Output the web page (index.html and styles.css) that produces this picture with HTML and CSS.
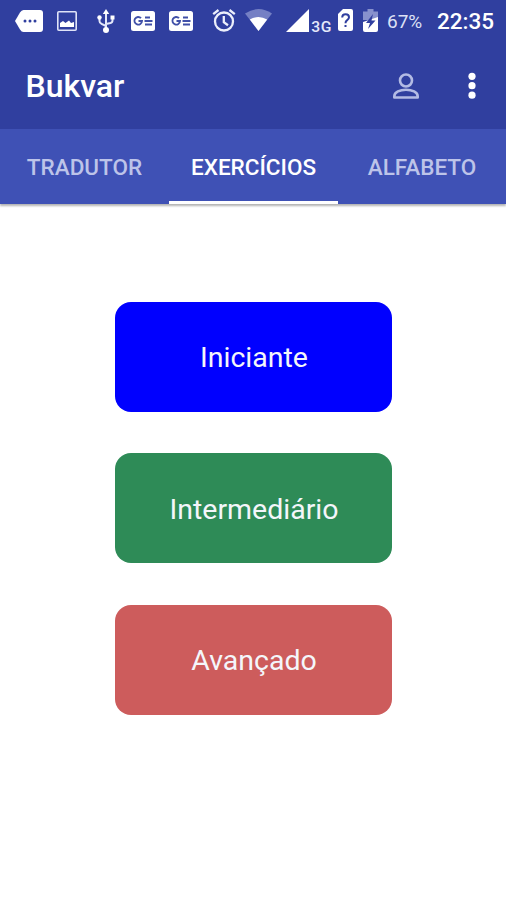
FILE: index.html
```html
<!DOCTYPE html>
<html lang="pt">
<head>
	<meta charset="UTF-8">
	<meta name="viewport" content="width=device-width, initial-scale=1.0">
	<title>Bukvar</title>
	<link rel="stylesheet" href="styles.css">
</head>
<body>
	<div class="statusBar">
		<svg class="message" width="28" height="22" viewBox="0 0 28 22">
			<path fill="#fff" d="M8.500 0H25a3 3 0 0 1 3 3v16a3 3 0 0 1-3 3H8.500Q6.500 22 5 19.500L0 11l5-8.500Q6.500 0 8.500 0z"/>
			<g fill="#303f9f"><circle cx="10" cy="11" r="1.500"/><circle cx="15" cy="11" r="1.500"/><circle cx="20" cy="11" r="1.500"/></g>
		</svg>
		<svg class="picture" width="20" height="20" viewBox="0 0 20 20">
			<rect x=".8" y=".8" width="18.400" height="18.400" rx="1" fill="none" stroke="#dfe3f8" stroke-width="1.600"/>
			<path fill="#fff" d="M3 16v-4l3-2 2.500 2L12 9.500l2 2.500 3-1v5z"/>
		</svg>
		<svg class="usb" width="18" height="24" viewBox="0 0 18 24">
			<g fill="none" stroke="#e4e8fa" stroke-width="2"><path d="M9 3v18M2.500 8v4q0 2 2 2.800L9 17M15.500 8v3.500q0 2-2 2.500L9 15"/></g>
			<g fill="#fff"><path d="M9 0l3.200 5H5.800z"/><circle cx="9" cy="21" r="3"/><circle cx="2.500" cy="8.500" r="2.200"/><path d="M13.500 6.500h4v4h-4z"/></g>
		</svg>
		<svg class="news" width="24" height="20" viewBox="0 0 24 20">
			<rect width="24" height="20" rx="2.500" fill="#fff"/>
			<g fill="none" stroke="#4050a8" stroke-width="1.900"><path d="M10 7.200A3.800 3.800 0 1 0 11 10H7.500M14 6.500h5M13.500 10h8M14 13.500h7"/></g>
		</svg>
		<svg class="news" width="24" height="20" viewBox="0 0 24 20">
			<rect width="24" height="20" rx="2.500" fill="#fff"/>
			<g fill="none" stroke="#4050a8" stroke-width="1.900"><path d="M10 7.200A3.800 3.800 0 1 0 11 10H7.500M14 6.500h5M13.500 10h8M14 13.500h7"/></g>
		</svg>
		<svg class="alarm" width="24" height="23" viewBox="0 0 24 23">
			<g fill="none" stroke="#eceffb" stroke-width="2.300"><circle cx="12" cy="12.500" r="9"/><path d="M1.200 5.200L6.500 1M22.800 5.200L17.500 1M11.800 7v6.200l4.200 3"/></g>
		</svg>
		<svg class="wifi" width="27" height="22" viewBox="0 0 27 22">
			<path fill="#7580c4" d="M0 4.500Q13.500-4.500 27 4.500L13.500 22z"/>
			<path fill="#fff" d="M4.800 10.500q8.700-5 17.400 0L13.500 22z"/>
		</svg>
		<svg class="signal" width="23" height="23" viewBox="0 0 23 23">
			<path fill="#fff" d="M23 0v23H0z"/>
		</svg>
		<span class="network">3G</span>
		<svg class="sim" width="15" height="22" viewBox="0 0 15 22">
			<path fill="#fff" d="M5 0h8a2 2 0 0 1 2 2v18a2 2 0 0 1-2 2H2a2 2 0 0 1-2-2V5z"/>
			<path fill="none" stroke="#303f9f" stroke-width="2" d="M4.200 8.500q0-3.300 3.400-3.300T11 8.300q0 1.700-1.800 2.900T7.500 14.200M7.500 16v2"/>
		</svg>
		<svg class="battery" width="15" height="23" viewBox="0 0 15 23">
			<path fill="#8791cd" d="M4.500 0h6v2.500H15V11H0V2.500h4.500z"/>
			<path fill="#fff" d="M0 13L15 8v13a2 2 0 0 1-2 2H2a2 2 0 0 1-2-2z"/>
			<path fill="#303f9f" d="M10 5L3 14h4l-2 6 7.500-8.500h-4z"/>
		</svg>
		<span class="percent">67%</span>
		<span class="clock">22:35</span>
	</div>

	<header class="toolbar">
		<h1>Bukvar</h1>
		<svg class="person" width="26" height="26" viewBox="0 0 26 26">
			<g fill="none" stroke="#b3bbe4" stroke-width="2.600"><circle cx="13" cy="7.500" r="6"/><path stroke-linejoin="round" d="M1.300 24.500v-1.300C1.300 19 7 16.700 13 16.700s11.700 2.300 11.700 6.500v1.300z"/></g>
		</svg>
		<svg class="more" width="8" height="28" viewBox="0 0 8 28">
			<g fill="#fff"><circle cx="4" cy="4.300" r="3.600"/><circle cx="4" cy="13.700" r="3.600"/><circle cx="4" cy="23.200" r="3.600"/></g>
		</svg>
	</header>

	<nav class="tabs">
		<a class="tab">TRADUTOR</a>
		<a class="tab active">EXERCÍCIOS</a>
		<a class="tab">ALFABETO</a>
	</nav>

	<main class="levels">
		<button class="level beginner">Iniciante</button>
		<button class="level intermediate">Intermediário</button>
		<button class="level advanced">Avançado</button>
	</main>
</body>
</html>
```
FILE: styles.css
```css
* {
	box-sizing: border-box;
}
body {
	margin: 0;
	height: 900px;
	background-color: white;
	font-family: Roboto, "Noto Sans", sans-serif;
	color: white;
	overflow: hidden;
}
svg {
	display: block;
	flex: none;
}
.statusBar {
	display: flex;
	align-items: flex-start;
	height: 42px;
	padding: 9px 0 0 15px;
	background-color: #303f9f;
	white-space: nowrap;
}
.message { margin-top: 1px; }
.picture { margin: 2px 0 0 14px; }
.usb { margin-left: 20px; }
.news { margin: 2px 0 0 16px; }
.news + .news { margin-left: 14px; }
.alarm { margin-left: 19px; }
.wifi { margin-left: 9px; }
.signal { margin-left: 14px; }
.network {
	width: 26px;
	padding: 12px 0 0 2px;
	font-size: 14px;
	line-height: 12px;
	font-weight: 500;
	letter-spacing: 0.5px;
	color: #e4e8fa;
	transform: scaleX(1.120);
	transform-origin: left;
}
.sim { margin-left: 3px; }
.battery { margin-left: 10px; }
.percent {
	width: 50px;
	padding-left: 9px;
	font-size: 19px;
	line-height: 25px;
	color: #dde1f5;
}
.clock {
	margin-left: 9px;
	font-size: 22.500px;
	line-height: 25px;
	font-weight: 500;
}
.toolbar {
	display: flex;
	align-items: center;
	height: 87px;
	padding: 0 30px 0 25.500px;
	background-color: #303f9f;
}
.toolbar h1 {
	flex: 1;
	margin: 0;
	font-size: 32px;
	line-height: 36px;
	font-weight: 500;
}
.more { margin-left: 49px; }
.tabs {
	display: grid;
	grid-template-columns: 169px 169px 168px;
	height: 75px;
	background-color: #3f51b5;
	box-shadow: 0 2px 2px rgba(0, 0, 0, 0.3);
	clip-path: inset(0 0 -6px 0);
}
.tab {
	height: 75px;
	font-size: 22.500px;
	line-height: 77px;
	font-weight: 500;
	text-align: center;
	color: #bdc4e9;
}
.active {
	border-bottom: 3px solid white;
	color: white;
}
.levels {
	display: flex;
	flex-direction: column;
	align-items: center;
	gap: 41.700px;
	padding-top: 97.500px;
}
.level {
	width: 277px;
	height: 110px;
	padding: 2px 0 0 2px;
	border: none;
	border-radius: 16px;
	font-family: inherit;
	font-size: 28.500px;
	color: #f4f6fa;
}
.beginner { background-color: #0000ff; }
.intermediate { background-color: #2e8b57; }
.advanced { background-color: #cd5c5c; }
```
